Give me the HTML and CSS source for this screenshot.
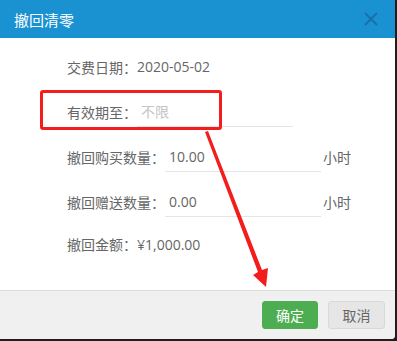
FILE: index.html
```html
<!DOCTYPE html>
<html lang="zh">
<head>
    <meta charset="UTF-8">
    <title>撤回清零</title>
    <link rel="stylesheet" href="styles.css">
</head>
<body>
    <div class="dialog">
        <div class="dialog-header">
            <span class="dialog-title">撤回清零</span>
            <span class="dialog-close">
                <svg width="16" height="16" viewBox="0 0 16 16"><path d="M2 2 L14 14 M14 2 L2 14" stroke="#1770a6" stroke-width="1.8" fill="none"/></svg>
            </span>
        </div>
        <div class="dialog-body">
            <div class="row">
                <span class="label">交费日期<span class="colon">：</span></span><span class="value">2020-05-02</span>
            </div>
            <div class="row">
                <span class="label">有效期至<span class="colon">：</span></span><input type="text" class="field" placeholder="不限">
            </div>
            <div class="row">
                <span class="label">撤回购买数量<span class="colon">：</span></span><input type="text" class="field" value="10.00"><span class="unit">小时</span>
            </div>
            <div class="row">
                <span class="label">撤回赠送数量<span class="colon">：</span></span><input type="text" class="field" value="0.00"><span class="unit">小时</span>
            </div>
            <div class="row row-last">
                <span class="label">撤回金额<span class="colon">：</span></span><span class="value">¥1,000.00</span>
            </div>
        </div>
        <div class="dialog-footer">
            <button class="btn btn-ok">确定</button>
            <button class="btn btn-cancel">取消</button>
        </div>

        <!-- marcas de anotación -->
        <div class="mark-box"></div>
        <svg class="mark-arrow" width="395" height="339" viewBox="0 0 395 339">
            <polygon points="205,132 208,131 262,270 268,268 266,287 253,275 258,272" fill="#f41d1d"/>
        </svg>
    </div>
</body>
</html>
```

FILE: styles.css
```css
html, body {
    margin: 0;
    padding: 0;
}
body {
    width: 397px;
    height: 341px;
    background-color: #1e1e1e;
    font-family: "Open Sans", "Noto Sans CJK SC", sans-serif;
    font-size: 14px;
    color: #666;
}
.dialog {
    position: relative;
    width: 395px;
    height: 339px;
    background-color: #fff;
    border-bottom-right-radius: 4px;
    overflow: hidden;
    display: flex;
    flex-direction: column;
}
.dialog-header {
    height: 38px;
    flex-shrink: 0;
    background-color: #1a92d2;
    display: flex;
    align-items: center;
    justify-content: space-between;
    padding: 0 16px 0 14px;
}
.dialog-title {
    color: #fff;
    font-size: 15px;
}
.dialog-close {
    display: flex;
}
.dialog-body {
    height: 252px;
    flex-shrink: 0;
    padding: 6px 0 0 67px;
    box-sizing: border-box;
}
.row {
    height: 45px;
    display: flex;
    align-items: center;
}
.row-last {
    height: 40px;
}
.label {
    color: #666;
}
.colon {
    font-family: "Noto Sans CJK TC", sans-serif;
}
.value {
    color: #666;
}
.field {
    width: 156px;
    height: 30px;
    box-sizing: border-box;
    border: none;
    border-bottom: 1px solid #e5e5e5;
    padding: 0 4px;
    margin: 0;
    font-family: "Open Sans", "Noto Sans CJK SC", sans-serif;
    font-size: 14px;
    color: #666;
    outline: none;
    background: transparent;
}
.field::placeholder {
    color: #c4c4c4;
}
.unit {
    margin-left: 2px;
    color: #666;
}
.dialog-footer {
    flex: 1;
    background-color: #f0f0f0;
    border-top: 1px solid #dcdcdc;
    display: flex;
    justify-content: flex-end;
    align-items: center;
    gap: 10px;
    padding: 0 10px 0 0;
}
.btn {
    height: 28px;
    padding: 0;
    border-radius: 3px;
    font-family: "Noto Sans CJK SC", "Noto Sans", sans-serif;
    font-size: 14px;
    cursor: pointer;
}
.btn-ok {
    width: 56px;
    background-color: #4cae50;
    border: 1px solid #4cae50;
    color: #fff;
}
.btn-cancel {
    width: 57px;
    background-color: #e6e6e6;
    border: 1px solid #d9d9d9;
    color: #666;
}
.mark-box {
    position: absolute;
    left: 40px;
    top: 90px;
    width: 182px;
    height: 40px;
    box-sizing: border-box;
    border: 3px solid #f41d1d;
    border-radius: 3px;
}
.mark-arrow {
    position: absolute;
    left: 0;
    top: 0;
}
```
